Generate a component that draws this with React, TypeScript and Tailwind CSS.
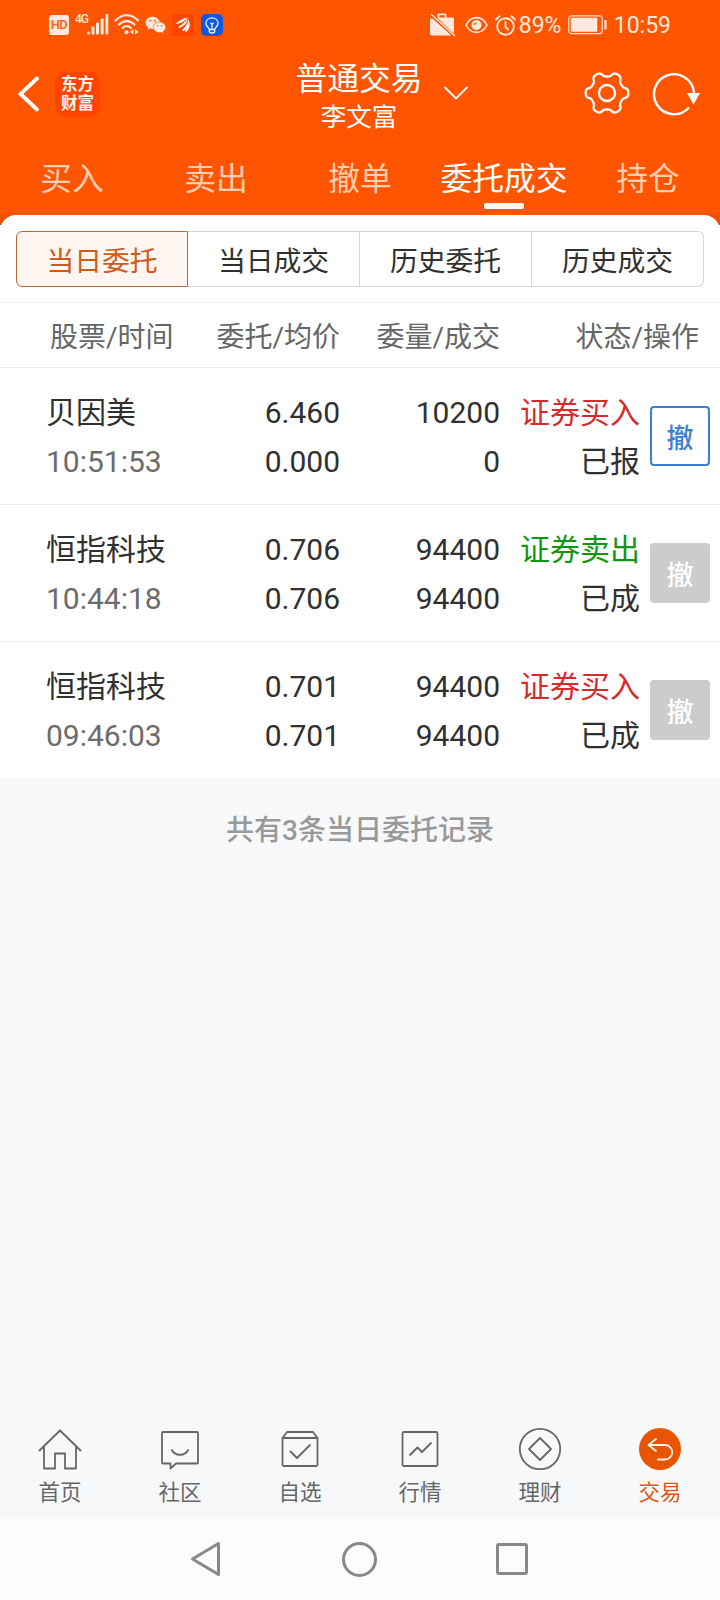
import React from "react";
import clsx from "clsx";
import { FaWeixin } from "react-icons/fa";

type Order = {
  id: number;
  name: string;
  time: string;
  price: string;
  avgPrice: string;
  amount: string;
  filled: string;
  side: "buy" | "sell";
  status: string;
  cancelable: boolean;
};

const ORDERS: Order[] = [
  { id: 1, name: "贝因美", time: "10:51:53", price: "6.460", avgPrice: "0.000", amount: "10200", filled: "0", side: "buy", status: "已报", cancelable: true },
  { id: 2, name: "恒指科技", time: "10:44:18", price: "0.706", avgPrice: "0.706", amount: "94400", filled: "94400", side: "sell", status: "已成", cancelable: false },
  { id: 3, name: "恒指科技", time: "09:46:03", price: "0.701", avgPrice: "0.701", amount: "94400", filled: "94400", side: "buy", status: "已成", cancelable: false },
];

const TABS = ["买入", "卖出", "撤单", "委托成交", "持仓"];
const ACTIVE_TAB = "委托成交";

const SEGMENTS = ["当日委托", "当日成交", "历史委托", "历史成交"];

// outline of a soft six-toothed gear around (23, 22)
const GEAR_POINTS = Array.from({ length: 120 }, (_, i) => {
  const angle = (i / 120) * Math.PI * 2;
  const r = 18.9 + 2.5 * Math.tanh(1.9 * Math.cos(6 * angle));
  return `${(23 + r * Math.cos(angle)).toFixed(2)},${(22 + r * Math.sin(angle)).toFixed(2)}`;
}).join(" ");

const StatusBar = () => {
  return (
    <div className="flex h-[50px] items-center pl-[49px] pr-[49px] text-[#ffe9dd]">
      <div className="flex h-5 w-5 items-center justify-center rounded-[3px] bg-[#ffe9dd] text-[13px] font-bold tracking-[-0.5px] text-[#f26a2a]">
        HD
      </div>
      <span className="-mt-[13px] ml-[6px] w-3 text-[12px] font-medium leading-none tracking-[-1px]">4G</span>
      <svg className="mt-[-2px] h-[21px] w-[22px]" viewBox="0 0 22 21" fill="currentColor">
        <rect x="0" y="17.5" width="3" height="3" rx="1" />
        <rect x="4.5" y="12.5" width="3" height="8" rx="1" />
        <rect x="9" y="8.500" width="3" height="12" rx="1" />
        <rect x="13.600" y="4.500" width="3" height="16" rx="1" />
        <rect x="18.300" y="0" width="3" height="20.500" rx="1" />
      </svg>
      <svg className="mt-[-2px] ml-[5px] h-[21px] w-[25px]" viewBox="0 0 25 21" fill="none" stroke="currentColor" strokeWidth="2.200" strokeLinecap="round">
        <path d="M1.500 6.500C8-0.500 17.500-0.500 24 6.500" />
        <path d="M5 10.500c4.500-4.600 11-4.600 15.500 0" />
        <path d="M8.500 14c2.500-2.500 6-2.500 8.500 0" />
        <circle cx="12.500" cy="18.200" r="2" fill="currentColor" stroke="none" />
        <path d="M19.500 15v5.500l-3.500-2.500zM21 15v5.500l3.500-2.500z" fill="currentColor" stroke="none" />
      </svg>
      <FaWeixin className="mt-[-1px] ml-[6px] h-5 w-[21px]" />
      <div className="ml-[6px] flex h-[22px] w-[22px] items-center justify-center bg-[#ff4300]">
        <svg className="h-[16px] w-[16px]" viewBox="0 0 16 16" fill="#fff">
          <path d="M0.500 7C3 4.500 7 1.500 12 0.500 10 4 6 6.500 0.500 7z" />
          <path d="M3 10C6.500 8 10.500 5 12.500 1 12.500 6 9 9 4.500 11z" />
          <path d="M10.500 15.500C10 12 13 9 13 2 16 7.500 15 12 10.500 15.500z" />
          <path d="M7 13C9 11.500 11.500 8.500 12.600 5 12.600 9.500 11 12.500 8.500 14.500z" />
        </svg>
      </div>
      <div className="ml-[7px] flex h-[22px] w-[22px] items-center justify-center rounded-[5px] bg-[#1558e0]">
        <svg className="h-[17px] w-[14px]" viewBox="0 0 14 17" fill="none" stroke="#e6f2ff" strokeWidth="1.300">
          <path d="M4.300 12.500C4.300 10.500 1 9.800 1 6.500 1 3 3.700 0.900 7 0.900s6 2.100 6 5.600c0 3.300-3.300 4-3.300 6z" />
          <path d="M4.300 12.500v1.500c0 1.200 1 2 2.700 2s2.700-0.800 2.700-2v-1.500M7 12V7.500M5.500 5.800L7 7.500l1.500-1.700" />
        </svg>
      </div>

      <svg className="ml-auto h-6 w-[26px]" viewBox="0 0 26 24" fill="currentColor">
        <path d="M0 5.500h2.500L21.500 22.500H2a2 2 0 0 1-2-2z" />
        <path d="M7.500 4V2a1.500 1.500 0 0 1 1.500-1.500h6A1.500 1.500 0 0 1 16.500 2v2.500h6A1.500 1.500 0 0 1 24 6v14.500L8 5.500zM9.300 2.300v2.200h5.400V2.300z" fillRule="evenodd" />
        <path d="M1 1l24 22" stroke="currentColor" strokeWidth="1.500" />
      </svg>
      <svg className="ml-[9px] h-[18px] w-[23px]" viewBox="0 0 23 18" fill="none" stroke="currentColor" strokeWidth="1.600">
        <path d="M1 9C6-0.800 17-0.800 22 9 17 18.800 6 18.800 1 9z" />
        <circle cx="11.500" cy="9" r="4.200" fill="currentColor" />
        <path d="M9.300 9a2.200 2.200 0 0 1 2.200-2.200" stroke="#ff5500" strokeWidth="1.200" />
      </svg>
      <svg className="ml-[7px] h-[21px] w-[21px]" viewBox="0 0 21 21" fill="none" stroke="currentColor" strokeWidth="1.900" strokeLinecap="round">
        <circle cx="10.500" cy="11.500" r="8.300" />
        <path d="M10.500 7v5l2.500 2.500M1 4.500L4.500 1.200M20 4.500L16.500 1.200" />
      </svg>
      <span className="ml-[3px] w-[42px] text-[23px] leading-none">89%</span>
      <svg className="ml-[7px] h-[20px] w-[40px]" viewBox="0 0 40 20" fill="none">
        <rect x="0.800" y="0.800" width="33.400" height="17.900" rx="3" stroke="currentColor" strokeWidth="1.200" />
        <rect x="2.800" y="2.800" width="26.500" height="13.900" rx="1" fill="currentColor" />
        <path d="M37.500 5v9.500" stroke="currentColor" strokeWidth="2.200" />
      </svg>
      <span className="ml-[6px] text-[23px] leading-none">10:59</span>
    </div>
  );
};

const Header = () => {
  return (
    <div className="flex h-[88px] items-center pl-[17px] pr-[20px] text-white">
      <svg className="h-9 w-[23px]" viewBox="0 0 23 36" fill="none" stroke="currentColor" strokeWidth="3.800" strokeLinecap="round">
        <path d="M20 2.500L3.500 18 20 33.500" />
      </svg>
      <div className="ml-[15px] flex h-[45px] w-[45px] flex-col items-center justify-center rounded-[10px] bg-[#ff4400] text-[16.500px] font-bold leading-[19px] text-[#fff3ec]">
        <span>东方</span>
        <span>财富</span>
      </div>
      <div className="ml-[190px] flex w-[138px] flex-col items-center pt-[3px]">
        <span className="text-[31.800px] leading-[42px]">普通交易</span>
        <span className="text-[25.500px] leading-[34px]">李文富</span>
      </div>
      <svg className="ml-[15px] mt-[-2px] h-[14px] w-[26px]" viewBox="0 0 26 14" fill="none" stroke="currentColor" strokeWidth="1.800">
        <path d="M1.500 1L13 12.500 24.500 1" />
      </svg>
      <svg className="ml-auto mt-[-2px] h-[44px] w-[46px]" viewBox="0 0 46 44" fill="none" stroke="currentColor" strokeWidth="2.300" strokeLinejoin="round">
        <polygon points={GEAR_POINTS} />
        <circle cx="23" cy="22" r="8" />
      </svg>
      <svg className="ml-[22px] mt-[1px] h-[44px] w-[48px]" viewBox="0 0 48 44" fill="none">
        <path d="M37 34.500A20 20 0 1 1 42 20" stroke="currentColor" strokeWidth="2.400" />
        <path d="M35 20h13L41.500 31.500z" fill="currentColor" />
      </svg>
    </div>
  );
};

const TradeTabs = () => {
  return (
    <div className="grid h-[77px] grid-cols-5">
      {TABS.map((tab) => {
        const active = tab === ACTIVE_TAB;
        return (
          <div key={tab} className="flex flex-col items-center whitespace-nowrap pt-[18px]">
            <span className={clsx("text-[31.800px] leading-[46px]", active ? "text-white" : "text-[#ffceb0]")}>
              {tab}
            </span>
            {active && <span className="mt-px h-[6px] w-10 rounded-[2px] bg-[#fff8ee]" />}
          </div>
        );
      })}
    </div>
  );
};

const OrderRow = ({ order }: { order: Order }) => {
  return (
    <div className="flex h-[137px] items-center border-t border-[#ebebeb] pl-[46px] pr-[10px] text-[30px] leading-[49px] text-[#303030]">
      <div className="flex w-[134px] flex-col whitespace-nowrap pt-[2px]">
        <span>{order.name}</span>
        <span className="text-[#6b6b6b]">{order.time}</span>
      </div>
      <div className="flex w-[160px] flex-col pt-[2px] text-right">
        <span>{order.price}</span>
        <span>{order.avgPrice}</span>
      </div>
      <div className="flex w-[160px] flex-col pt-[2px] text-right">
        <span>{order.amount}</span>
        <span>{order.filled}</span>
      </div>
      <div className="flex w-[140px] flex-col pt-[2px] text-right">
        <span className={order.side === "buy" ? "text-[#d82a2a]" : "text-[#109610]"}>
          {order.side === "buy" ? "证券买入" : "证券卖出"}
        </span>
        <span>{order.status}</span>
      </div>
      <button
        className={clsx(
          "ml-[10px] h-[60px] w-[60px] rounded-[4px] pt-[6px] text-[27px] font-medium leading-none",
          order.cancelable ? "border-2 border-[#3f80cc] bg-white text-[#3f80cc]" : "bg-[#cccccc] text-white"
        )}
      >
        撤
      </button>
    </div>
  );
};

const NAV_ITEMS = [
  {
    label: "首页",
    icon: <path d="M1 22L22 1.500 43 22M6 18v21.500h11V24.500h10v15h11V18" />,
  },
  {
    label: "社区",
    icon: (
      <>
        <path d="M5 3h34a1 1 0 0 1 1 1v29.500a1 1 0 0 1-1 1H18l-5.500 5v-5H5a1 1 0 0 1-1-1V4a1 1 0 0 1 1-1z" />
        <path d="M13.500 20.500c3.500 7 13.500 7 17 0" />
      </>
    ),
  },
  {
    label: "自选",
    icon: (
      <>
        <path d="M4.500 9L9 3h26l4.500 6v26.500a1.500 1.500 0 0 1-1.500 1.500H6a1.500 1.500 0 0 1-1.500-1.500zM4.500 9h35" />
        <path d="M12 22l7 7 13.500-13.500" />
      </>
    ),
  },
  {
    label: "行情",
    icon: (
      <>
        <rect x="4.500" y="3" width="35" height="34" rx="1.500" />
        <path d="M11.500 26.500l8-8 4.500 4.500 9.500-9.500" />
      </>
    ),
  },
  {
    label: "理财",
    icon: (
      <>
        <circle cx="22" cy="20" r="20.200" />
        <path d="M22 9l11 11-11 11-11-11z" />
      </>
    ),
  },
  {
    label: "交易",
    active: true,
    icon: (
      <>
        <circle cx="22" cy="20" r="21" fill="#e85500" stroke="none" />
        <path d="M18.500 9.500L10.500 16l8 6.500M10.500 16H27a7.200 7.200 0 0 1 0 14.500h-8" stroke="#fff3e6" />
      </>
    ),
  },
];

const BottomNav = () => {
  return (
    <div className="grid h-[118px] grid-cols-6">
      {NAV_ITEMS.map((item) => (
        <div
          key={item.label}
          className={clsx("flex flex-col items-center pt-[29px]", item.active ? "text-[#e0560f]" : "text-[#666666]")}
        >
          <svg className="h-10 w-11 overflow-visible" viewBox="0 0 44 40" fill="none" stroke="currentColor" strokeWidth="1.800" strokeLinejoin="round">
            {item.icon}
          </svg>
          <span className="mt-[10px] text-[21.500px] leading-[28px]">{item.label}</span>
        </div>
      ))}
    </div>
  );
};

const SystemNav = () => {
  return (
    <div className="flex h-[82px] items-center justify-between bg-[#fcfcfc] pl-[189px] pr-[192px] text-[#888888]">
      <svg className="h-[36px] w-[31px]" viewBox="0 0 31 36" fill="none" stroke="currentColor" strokeWidth="3" strokeLinejoin="round">
        <path d="M29.500 2.500v31L3.500 18z" />
      </svg>
      <div className="ml-[2px] h-[35px] w-[35px] rounded-full border-[3px] border-[#888888]" />
      <div className="h-[32px] w-[32px] rounded-[3px] border-[3px] border-[#888888]" />
    </div>
  );
};

const App = () => {
  return (
    <div className="flex h-[1600px] w-[720px] flex-col overflow-hidden bg-[#f7f8fa] font-['Roboto','Noto_Sans_CJK_SC',sans-serif]">
      <div className="bg-[#ff5500]">
        <StatusBar />
        <Header />
        <TradeTabs />
      </div>

      <div className="bg-linear-to-b from-[#ea5208] from-[10px] to-transparent to-[10px]">
        <div className="rounded-t-[16px] bg-white">
          <div className="flex h-[87px] px-4 pt-4">
            {SEGMENTS.map((segment, i) => (
              <div
                key={segment}
                className={clsx(
                  "flex h-14 w-[172px] items-center justify-center border pt-[5px] text-[27.800px]",
                  i === 0
                    ? "rounded-l-[6px] border-[#b9683c] bg-[#fff5f1] text-[#d05a18]"
                    : "border-l-0 border-[#d3d6d6] text-[#303030]",
                  i === SEGMENTS.length - 1 && "rounded-r-[6px]"
                )}
              >
                {segment}
              </div>
            ))}
          </div>

          <div className="flex h-[65px] items-center border-t border-[#f3f3f3] pl-[50px] pt-[5px] text-[28px] text-[#666666]">
            <span className="w-[130px]">股票/时间</span>
            <span className="w-[160px] text-right">委托/均价</span>
            <span className="w-[160px] text-right">委量/成交</span>
            <span className="w-[199px] text-right">状态/操作</span>
          </div>

          {ORDERS.map((order) => (
            <OrderRow key={order.id} order={order} />
          ))}
        </div>
      </div>

      <div className="flex-1 pt-[33px] text-center text-[28px] font-medium leading-10 text-[#999999]">
        共有3条当日委托记录
      </div>

      <BottomNav />
      <SystemNav />
    </div>
  );
};

export default App;
